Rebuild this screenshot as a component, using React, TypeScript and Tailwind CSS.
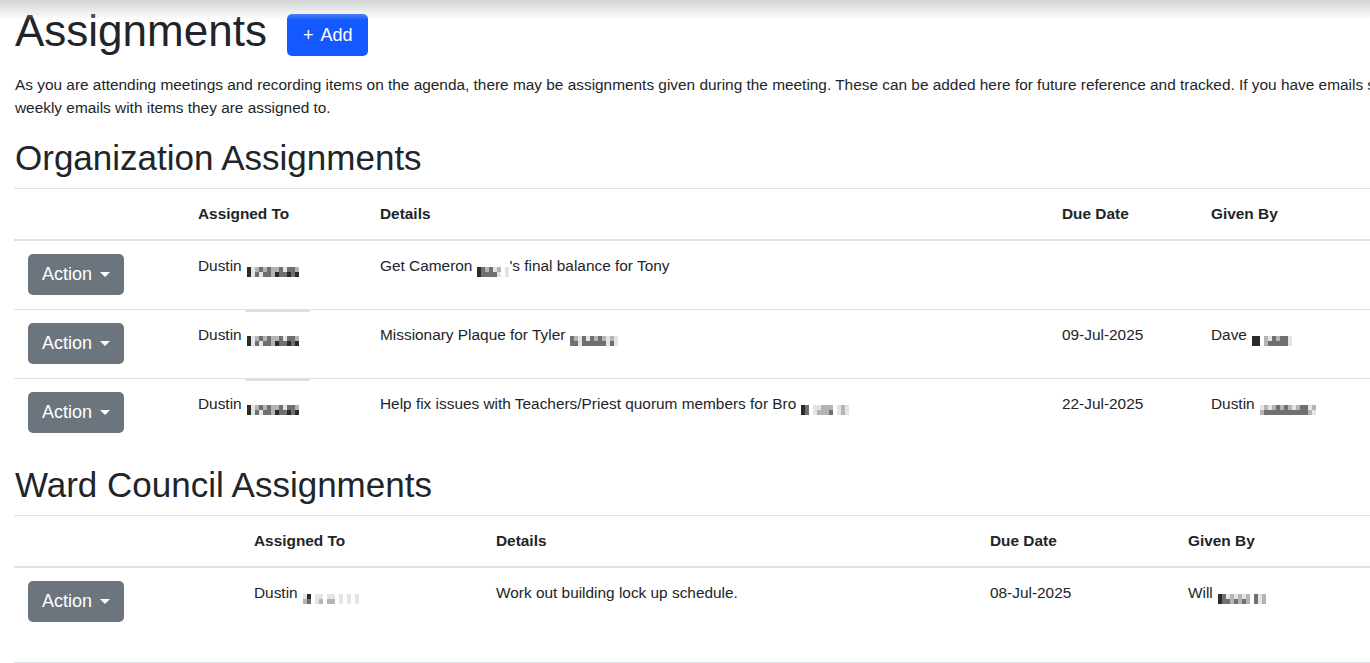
import React from "react";

type Row = {
  to: [string, string, string];
  details: React.ReactNode;
  due: string;
  by?: [string, string, string];
  mark?: boolean;
};

// pixelated (redacted) surnames, two rows of 4x5 cells
const shade: Record<string, string> = {
  "0": "bg-transparent",
  "1": "bg-[#e4e4e4]",
  "2": "bg-[#b4b4b4]",
  "3": "bg-[#707070]",
  "4": "bg-[#2b2b2b]",
};

function Redacted({ top, bottom }: { top: string; bottom: string }) {
  const cells = (s: string) =>
    s.split("").map((c, i) => <span key={i} className={`block w-[4px] h-[5px] ${shade[c]}`} />);
  return (
    <span className="inline-flex flex-col align-[-1px] ml-[5px]">
      <span className="flex">{cells(top)}</span>
      <span className="flex">{cells(bottom)}</span>
    </span>
  );
}

function ActionButton() {
  return (
    <button className="h-[41px] px-[14px] rounded-[5px] bg-[#6c757d] text-white text-[18px] flex items-center">
      Action
      <span className="ml-[8px] inline-block w-0 h-0 border-t-[5px] border-x-[5px] border-t-white border-x-transparent" />
    </button>
  );
}

function AssignmentTable({ cols, rows, tall }: { cols: number[]; rows: Row[]; tall?: boolean }) {
  return (
    <table className="table-fixed w-full border-collapse text-[15.4px] leading-[22.5px] text-[#212529]">
      <colgroup>
        {cols.map((w, i) => (
          <col key={i} style={{ width: w }} />
        ))}
        <col />
      </colgroup>
      <thead>
        <tr className={`border-t border-[#dee2e6] border-b-2 text-left ${tall ? "h-[52px]" : "h-[51px]"}`}>
          <th className="px-[14px]"></th>
          <th className="px-[14px] font-bold">Assigned To</th>
          <th className="px-[14px] font-bold">Details</th>
          <th className="px-[14px] font-bold">Due Date</th>
          <th className="px-[14px] font-bold">Given By</th>
        </tr>
      </thead>
      <tbody>
        {rows.map((r, i) => (
          <tr key={i} className={i < rows.length - 1 ? "border-b border-[#dee2e6]" : ""}>
            <td className="pl-[14px] pt-[13px] pb-[14px] align-top">
              <ActionButton />
            </td>
            <td className="relative px-[14px] pt-[14px] align-top">
              {r.mark && <span className="absolute -top-[1px] left-[61px] w-[65px] h-[3px] bg-[#dce1e5]" />}
              {r.to[0]}
              <Redacted top={r.to[1]} bottom={r.to[2]} />
            </td>
            <td className="px-[14px] pt-[14px] align-top">{r.details}</td>
            <td className="px-[14px] pt-[14px] align-top">{r.due}</td>
            <td className="px-[14px] pt-[14px] align-top">
              {r.by && (
                <>
                  {r.by[0]}
                  <Redacted top={r.by[1]} bottom={r.by[2]} />
                </>
              )}
            </td>
          </tr>
        ))}
      </tbody>
    </table>
  );
}

const orgRows: Row[] = [
  {
    to: ["Dustin", "4123232231332", "4131332433434"],
    details: (
      <>
        Get Cameron
        <Redacted top="43231201" bottom="43333101" />
        's final balance for Tony
      </>
    ),
    due: "",
  },
  {
    to: ["Dustin", "4123232231332", "4131332433434"],
    details: (
      <>
        Missionary Plaque for Tyler
        <Redacted top="321313232121" bottom="331333333131" />
      </>
    ),
    due: "09-Jul-2025",
    by: ["Dave", "44021323310", "44023333310"],
    mark: true,
  },
  {
    to: ["Dustin", "4123232231332", "4131332433434"],
    details: (
      <>
        Help fix issues with Teachers/Priest quorum members for Bro
        <Redacted top="430112220121" bottom="430122230121" />
      </>
    ),
    due: "22-Jul-2025",
    by: ["Dustin", "12123232123312", "23333333333321"],
    mark: true,
  },
];

const wardRows: Row[] = [
  {
    to: ["Dustin", "14011011010101", "23012022010101"],
    details: "Work out building lock up schedule.",
    due: "08-Jul-2025",
    by: ["Will", "431212120312", "433232320312"],
  },
];

export default function App() {
  return (
    <div className="relative w-full min-h-screen overflow-hidden bg-white font-['Liberation_Sans',Arial,sans-serif] text-[#212529]">
      <div className="absolute top-0 inset-x-0 h-[20px] bg-linear-to-b from-[#d4d4d4] to-white/0" />
      <div className="w-[1590px] px-[14px] pt-[4px]">
        <div className="flex items-start">
          <h1 className="text-[44px] leading-[53px] ml-px">Assignments</h1>
          <button className="ml-[20px] mt-[10px] h-[42px] px-[16px] rounded-[5px] bg-[#1459ff] text-white text-[18px] flex items-center gap-[7px]">
            <span>+</span>
            <span>Add</span>
          </button>
        </div>
        <p className="mt-[17px] w-[1550px] ml-px text-[15.4px] leading-[22.5px]">
          As you are attending meetings and recording items on the agenda, there may be assignments given during the
          meeting. These can be added here for future reference and tracked. If you have emails set up, members will get
          weekly emails with items they are assigned to.
        </p>
        <h2 className="mt-[18px] mb-[9px] ml-px text-[35px] leading-[42px]">Organization Assignments</h2>
        <AssignmentTable cols={[170, 182, 682, 149]} rows={orgRows} />
        <h2 className="mt-[17px] mb-[9px] ml-px text-[35px] leading-[42px]">Ward Council Assignments</h2>
        <AssignmentTable cols={[226, 242, 494, 198]} rows={wardRows} tall />
        <div className="mt-[26px] border-t border-[#dee2e6]" />
      </div>
    </div>
  );
}
